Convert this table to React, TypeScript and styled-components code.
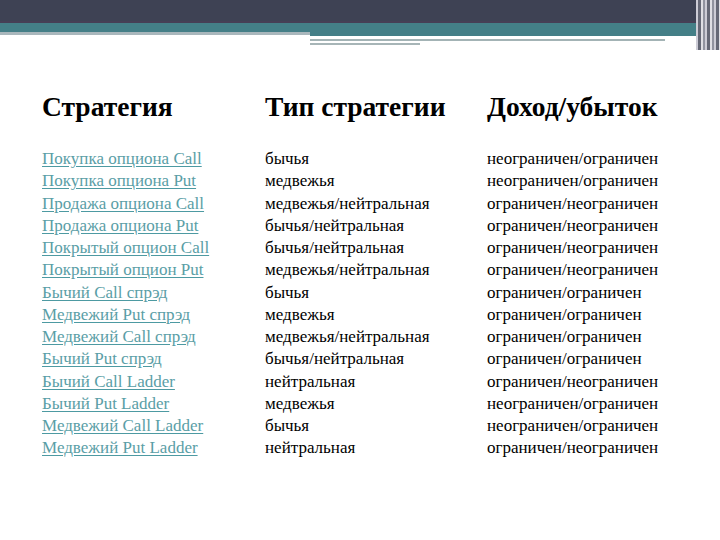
import styled, {createGlobalStyle} from "styled-components";

const GlobalStyle = createGlobalStyle`
    html, body {
        margin: 0;
        padding: 0;
        background: #ffffff;
    }
    body {
        font-family: "Liberation Serif", "Times New Roman", serif;
    }
`

const Slide = styled.div`
    width: 720px;
    height: 540px;
    background: #ffffff;
    overflow: hidden;
`

const Header = styled.header`
    display: flex;
    height: 50px;
`

const HeaderMain = styled.div`
    flex: 1;
    display: flex;
    flex-direction: column;
`

const DarkBand = styled.div`
    height: 21px;
    background: #3e4254;
    border-bottom: 2px solid #463f55;
`

const TealBand = styled.div`
    height: 9px;
    background: #447f87;
`

const UnderRow = styled.div`
    display: flex;
`

const LeftRule = styled.div`
    width: 310px;
    height: 3px;
    background: #a9b7bc;
`

const RightRules = styled.div`
    flex: 1;
    display: flex;
    flex-direction: column;
`

const Rule = styled.div<{ $h: number; $w: string; $c: string }>`
    height: ${p => p.$h}px;
    width: ${p => p.$w};
    background: ${p => p.$c};
`

const SideStrip = styled.div`
    width: 24px;
    height: 50px;
    background: repeating-linear-gradient(90deg, #c4c3cf 0 2px, #4a4d5e 2px 5px, #d9d8df 5px 7px, #7d7f8e 7px 9px);
    opacity: 0.85;
`

const Table = styled.div`
    display: grid;
    grid-template-columns: 223px 222px 1fr;
    padding: 41px 0 0 42px;
    color: #000000;
    font-family: "Liberation Serif", "Times New Roman", serif;
`

const HeadCell = styled.div`
    font-weight: bold;
    font-size: 27.5px;
    line-height: 32px;
    padding-bottom: 25px;
`

const Cell = styled.div`
    font-size: 17px;
    line-height: 22.25px;
    white-space: nowrap;
`

const LinkCell = styled(Cell)`
    color: #5a9ea6;
    text-decoration: underline;
    text-decoration-color: #4d9aa2;
    text-underline-offset: 2px;
`

const rows: [string, string, string][] = [
    ["Покупка опциона Call", "бычья", "неограничен/ограничен"],
    ["Покупка опциона Put", "медвежья", "неограничен/ограничен"],
    ["Продажа опциона Call", "медвежья/нейтральная", "ограничен/неограничен"],
    ["Продажа опциона Put", "бычья/нейтральная", "ограничен/неограничен"],
    ["Покрытый опцион Call", "бычья/нейтральная", "ограничен/неограничен"],
    ["Покрытый опцион Put", "медвежья/нейтральная", "ограничен/неограничен"],
    ["Бычий Call спрэд", "бычья", "ограничен/ограничен"],
    ["Медвежий Put спрэд", "медвежья", "ограничен/ограничен"],
    ["Медвежий Call спрэд", "медвежья/нейтральная", "ограничен/ограничен"],
    ["Бычий Put спрэд", "бычья/нейтральная", "ограничен/ограничен"],
    ["Бычий Call Ladder", "нейтральная", "ограничен/неограничен"],
    ["Бычий Put Ladder", "медвежья", "неограничен/ограничен"],
    ["Медвежий Call Ladder", "бычья", "неограничен/ограничен"],
    ["Медвежий Put Ladder", "нейтральная", "ограничен/неограничен"],
]

const App = () => {
    return (
        <Slide>
            <GlobalStyle/>
            <Header>
                <HeaderMain>
                    <DarkBand/>
                    <TealBand/>
                    <UnderRow>
                        <LeftRule/>
                        <RightRules>
                            <Rule $h={4} $w="100%" $c="#447f87"/>
                            <Rule $h={3} $w="355px" $c="#ffffff"/>
                            <Rule $h={2} $w="355px" $c="#a3b3b5"/>
                            <Rule $h={2} $w="110px" $c="#ffffff"/>
                            <Rule $h={2} $w="110px" $c="#a7b5b7"/>
                        </RightRules>
                    </UnderRow>
                </HeaderMain>
                <SideStrip/>
            </Header>
            <Table>
                <HeadCell>Стратегия</HeadCell>
                <HeadCell>Тип стратегии</HeadCell>
                <HeadCell>Доход/убыток</HeadCell>
                {rows.map(([name, kind, result]) => (
                    <>
                        <LinkCell key={name + "-n"}>{name}</LinkCell>
                        <Cell key={name + "-k"}>{kind}</Cell>
                        <Cell key={name + "-r"}>{result}</Cell>
                    </>
                ))}
            </Table>
        </Slide>
    )
}

export default App
